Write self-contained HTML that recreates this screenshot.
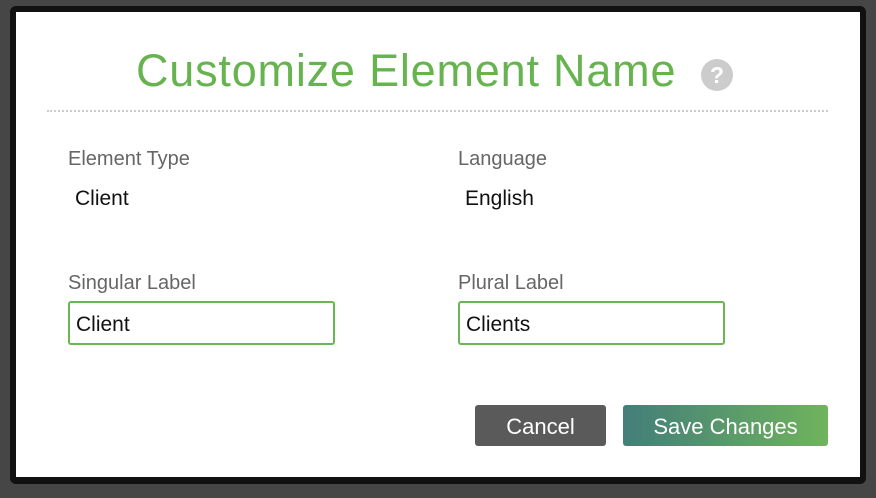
<!DOCTYPE html>
<html><head><style>
body{margin:0;width:876px;height:498px;background:#464646;position:relative;overflow:hidden;font-family:"Liberation Sans",sans-serif}
.frame{position:absolute;left:10px;top:6px;width:856px;height:478px;background:#111;border-radius:6px}
.box{position:absolute;left:16px;top:12px;width:844px;height:465px;background:#fff}
.title{position:absolute;left:136px;top:45px;font-size:45px;letter-spacing:0.8px;color:#67b350;white-space:nowrap}
.help{position:absolute;left:701px;top:59px;width:32px;height:32px;border-radius:50%;background:#ccc;color:#fff;font-weight:bold;font-size:23px;text-align:center;line-height:32px}
.hr{position:absolute;left:47px;top:110px;width:781px;border-top:2px dotted #ccc}
.lbl{position:absolute;font-size:20px;color:#666}
.val{position:absolute;font-size:21px;color:#111}
.inp{position:absolute;width:267px;height:44px;border:2px solid #6ab554;border-radius:3px;box-sizing:border-box;font-size:21px;padding:10px 0 0 6px;color:#111}
.btn{position:absolute;top:405px;height:41px;border-radius:3px;color:#fff;font-size:22px;text-align:center;line-height:43px}
</style></head><body>
<div class="frame"></div><div class="box"></div>
<div class="title">Customize Element Name</div>
<div class="help">?</div>
<div class="hr"></div>
<div class="lbl" style="left:68px;top:148px">Element Type</div>
<div class="lbl" style="left:458px;top:148px">Language</div>
<div class="val" style="left:75px;top:187px">Client</div>
<div class="val" style="left:465px;top:187px">English</div>
<div class="lbl" style="left:68px;top:272px">Singular Label</div>
<div class="lbl" style="left:458px;top:272px">Plural Label</div>
<div class="inp" style="left:68px;top:301px">Client</div>
<div class="inp" style="left:458px;top:301px">Clients</div>
<div class="btn" style="left:475px;width:131px;background:#5a5a5a">Cancel</div>
<div class="btn" style="left:623px;width:205px;background:linear-gradient(90deg,#437e7a,#70b35d)">Save Changes</div>
</body></html>
